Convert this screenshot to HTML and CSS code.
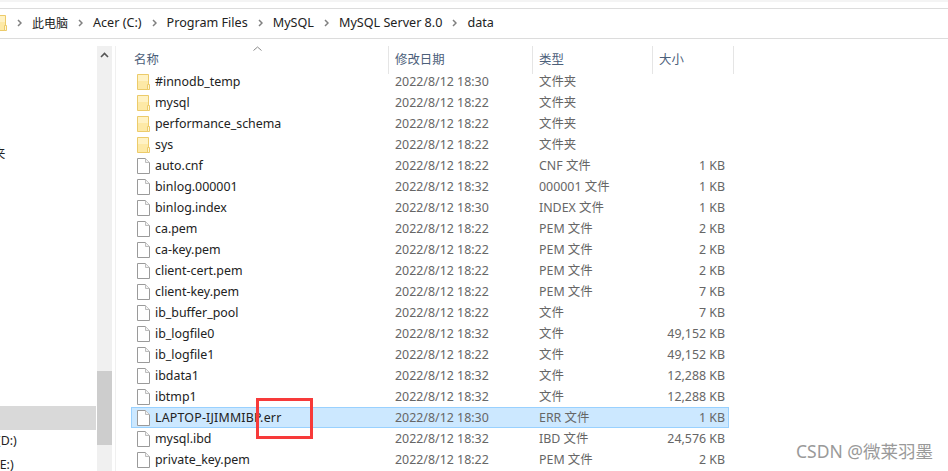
FILE: index.html
```html
<!DOCTYPE html>
<html lang="zh-CN">
<head>
    <meta charset="UTF-8">
    <title>data</title>
    <link rel="stylesheet" href="styles.css">
</head>
<body>
    <svg class="defs" width="0" height="0">
        <symbol id="folder" viewBox="0 0 13 16">
            <path d="M.5.5h11v15H.5z" fill="#fde9a6" stroke="#eccb6a"/>
            <path d="M1 1h10v6H1z" fill="#fff2c4"/>
            <path d="M10.500 10.500h2v5h-2z" fill="#fff6d6" stroke="#eccb6a"/>
        </symbol>
        <symbol id="file" viewBox="0 0 13 16">
            <path d="M.5.500h8l4 4v11H.5z" fill="#fff" stroke="#9a9a9a"/>
            <path d="M8.500.500v4h4" fill="#f2f2f2" stroke="#bdbdbd"/>
        </symbol>
        <symbol id="chevron" viewBox="0 0 5 8">
            <path d="M1 1l3 3-3 3" fill="none" stroke="#808080" stroke-width="1.500"/>
        </symbol>
    </svg>

    <div class="top-lines"></div>

    <div class="address-bar">
        <svg class="crumb-icon"><use href="#folder"/></svg>
        <svg class="sep"><use href="#chevron"/></svg><span class="crumb-cjk">此电脑</span>
        <svg class="sep"><use href="#chevron"/></svg><span>Acer (C:)</span>
        <svg class="sep"><use href="#chevron"/></svg><span>Program Files</span>
        <svg class="sep"><use href="#chevron"/></svg><span>MySQL</span>
        <svg class="sep"><use href="#chevron"/></svg><span>MySQL Server 8.0</span>
        <svg class="sep"><use href="#chevron"/></svg><span>data</span>
    </div>

    <div class="main">
        <div class="sidebar">
            <div class="side-label side-folder">夹</div>
            <div class="side-selected"></div>
            <div class="side-label side-d">(D:)</div>
            <div class="side-label side-e">(E:)</div>
        </div>
        <div class="side-scroll">
            <svg class="scroll-up" width="9" height="6" viewBox="0 0 9 6"><path d="M1 5l3.500-3.500L8 5" fill="none" stroke="#555" stroke-width="1.600"/></svg>
            <div class="scroll-thumb"></div>
        </div>
        <div class="list">
            <div class="head">
                <div class="head-cell name-head">名称<svg class="sort" width="9" height="5" viewBox="0 0 9 5"><path d="M.5 4.500l4-3.500 4 3.500" fill="none" stroke="#888"/></svg></div>
                <div class="head-cell">修改日期</div>
                <div class="head-cell">类型</div>
                <div class="head-cell">大小</div>
            </div>
            <div id="rows"></div>
        </div>
    </div>

    <div class="red-box"></div>
    <div class="watermark">CSDN @微莱羽墨</div>

    <script>
        const files = [
            ['folder', '#innodb_temp', '2022/8/12 18:30', '文件夹', ''],
            ['folder', 'mysql', '2022/8/12 18:22', '文件夹', ''],
            ['folder', 'performance_schema', '2022/8/12 18:22', '文件夹', ''],
            ['folder', 'sys', '2022/8/12 18:22', '文件夹', ''],
            ['file', 'auto.cnf', '2022/8/12 18:22', 'CNF 文件', '1 KB'],
            ['file', 'binlog.000001', '2022/8/12 18:32', '000001 文件', '1 KB'],
            ['file', 'binlog.index', '2022/8/12 18:30', 'INDEX 文件', '1 KB'],
            ['file', 'ca.pem', '2022/8/12 18:22', 'PEM 文件', '2 KB'],
            ['file', 'ca-key.pem', '2022/8/12 18:22', 'PEM 文件', '2 KB'],
            ['file', 'client-cert.pem', '2022/8/12 18:22', 'PEM 文件', '2 KB'],
            ['file', 'client-key.pem', '2022/8/12 18:22', 'PEM 文件', '7 KB'],
            ['file', 'ib_buffer_pool', '2022/8/12 18:22', '文件', '7 KB'],
            ['file', 'ib_logfile0', '2022/8/12 18:32', '文件', '49,152 KB'],
            ['file', 'ib_logfile1', '2022/8/12 18:22', '文件', '49,152 KB'],
            ['file', 'ibdata1', '2022/8/12 18:32', '文件', '12,288 KB'],
            ['file', 'ibtmp1', '2022/8/12 18:32', '文件', '12,288 KB'],
            ['file', 'LAPTOP-IJIMMIBP.err', '2022/8/12 18:30', 'ERR 文件', '1 KB'],
            ['file', 'mysql.ibd', '2022/8/12 18:32', 'IBD 文件', '24,576 KB'],
            ['file', 'private_key.pem', '2022/8/12 18:22', 'PEM 文件', '2 KB']
        ];

        const rows = document.getElementById('rows');
        files.forEach(f => {
            const row = document.createElement('div');
            row.className = f[1].endsWith('.err') ? 'row selected' : 'row';
            row.innerHTML = '<div class="cell name"><svg class="icon"><use href="#' + f[0] + '"/></svg>' + f[1] + '</div>'
                + '<div class="cell date">' + f[2] + '</div>'
                + '<div class="cell type">' + f[3] + '</div>'
                + '<div class="cell size">' + f[4] + '</div>';
            rows.appendChild(row);
        });
    </script>
</body>
</html>
```

FILE: styles.css
```css
html, body {
    margin: 0;
    height: 471px;
    overflow: hidden;
}

body {
    position: relative;
    background-color: #fff;
    font-family: "Noto Sans", "Noto Sans CJK SC", sans-serif;
    font-size: 12.4px;
    color: #333;
}

.defs {
    position: absolute;
}

.top-lines {
    box-sizing: border-box;
    height: 9px;
    border-top: 2px solid #f4f4f4;
    border-bottom: 1px solid #dcdcdc;
}

.address-bar {
    display: flex;
    align-items: center;
    height: 27px;
    padding-bottom: 2px;
    border-bottom: 1px solid #dcdcdc;
    font-size: 12.6px;
    color: #222;
}

.crumb-cjk {
    font-size: 12px;
}

.crumb-icon {
    width: 13px;
    height: 16px;
    margin-left: -6px;
    flex: none;
}

.sep {
    width: 5px;
    height: 8px;
    margin: 1px 10px 0;
    flex: none;
}

.main {
    display: flex;
    height: 432px;
}

.sidebar {
    position: relative;
    width: 97px;
    flex: none;
}

.side-label {
    position: absolute;
    color: #222;
}

.side-folder {
    left: -7px;
    top: 105px;
}

.side-d {
    left: -3px;
    top: 393px;
}

.side-e {
    left: -4px;
    top: 417px;
}

.side-selected {
    position: absolute;
    left: 0;
    top: 367px;
    width: 96px;
    height: 24px;
    background-color: #d9d9d9;
}

.side-scroll {
    position: relative;
    width: 15px;
    flex: none;
    margin-top: 7px;
    background-color: #f0f0f0;
}

.scroll-up {
    position: absolute;
    left: 3px;
    top: 6px;
}

.scroll-thumb {
    position: absolute;
    left: 0;
    top: 325px;
    width: 15px;
    height: 74px;
    background-color: #cdcdcd;
}

.list {
    flex: none;
    margin-left: 3px;
    margin-top: 7px;
    padding-left: 15px;
    border-left: 1px solid #f0f0f0;
}

.head {
    display: grid;
    grid-template-columns: 258px 144px 120px 81px;
    height: 25px;
}

.head-cell {
    position: relative;
    padding-left: 6px;
    border-right: 1px solid #e5e5e5;
    color: #4c607a;
    line-height: 28px;
}

.name-head {
    padding-left: 3px;
}

.sort {
    position: absolute;
    left: 122px;
    top: 0;
}

.row {
    display: grid;
    grid-template-columns: 256px 144px 120px 76px;
    width: 598px;
    height: 21px;
    line-height: 20px;
    border: 1px solid transparent;
    box-sizing: border-box;
    color: #222;
}

.row.selected {
    background-color: #cce8ff;
    border-color: #99d1ff;
}

.row.selected .name {
    letter-spacing: 0.2px;
}

.cell {
    white-space: nowrap;
}

.name {
    display: flex;
    align-items: center;
    padding-left: 5px;
}

.icon {
    width: 13px;
    height: 16px;
    margin-right: 5px;
    flex: none;
}

.date, .type {
    padding-left: 7px;
    color: #666;
}

.size {
    padding-right: 3px;
    text-align: right;
    color: #666;
}

.red-box {
    position: absolute;
    left: 256px;
    top: 398px;
    width: 51px;
    height: 35px;
    border: 3px solid #f73a3a;
}

.watermark {
    position: absolute;
    left: 796px;
    top: 438px;
    color: #9a9a9a;
    font-size: 17.5px;
    white-space: nowrap;
}
```
